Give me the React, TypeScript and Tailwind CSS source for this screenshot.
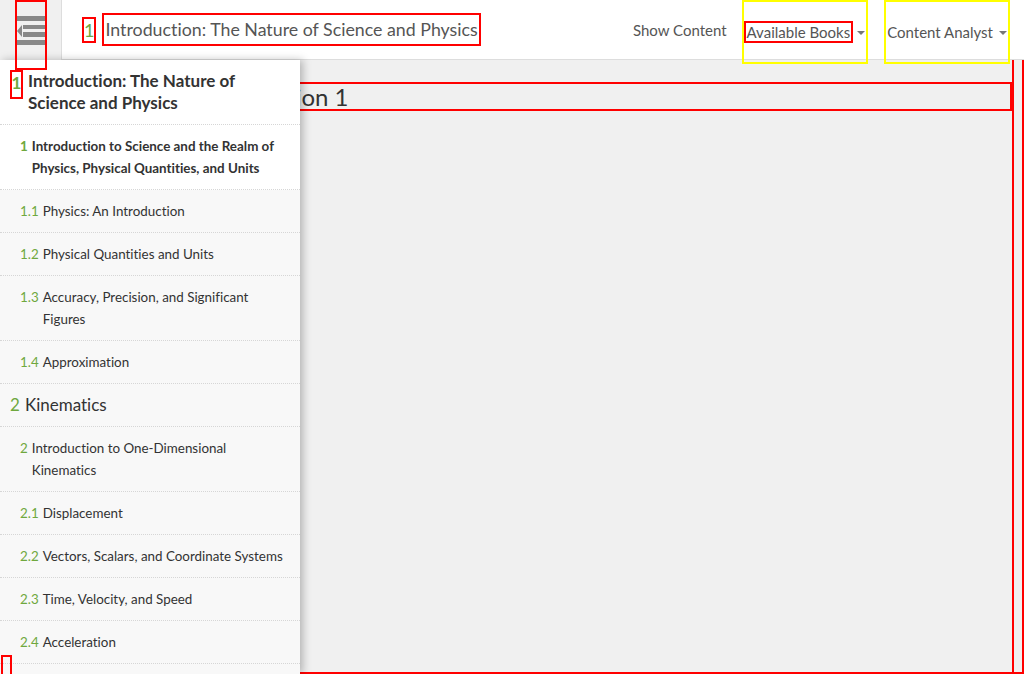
import React from "react";

type Item = {
  num: string;
  title: string;
  kind: "chapter" | "intro" | "section";
  active?: boolean;
};

const items: Item[] = [
  { num: "1", title: "Introduction to Science and the Realm of Physics, Physical Quantities, and Units", kind: "intro", active: true },
  { num: "1.1", title: "Physics: An Introduction", kind: "section" },
  { num: "1.2", title: "Physical Quantities and Units", kind: "section" },
  { num: "1.3", title: "Accuracy, Precision, and Significant Figures", kind: "section" },
  { num: "1.4", title: "Approximation", kind: "section" },
  { num: "2", title: "Kinematics", kind: "chapter" },
  { num: "2", title: "Introduction to One-Dimensional Kinematics", kind: "intro" },
  { num: "2.1", title: "Displacement", kind: "section" },
  { num: "2.2", title: "Vectors, Scalars, and Coordinate Systems", kind: "section" },
  { num: "2.3", title: "Time, Velocity, and Speed", kind: "section" },
  { num: "2.4", title: "Acceleration", kind: "section" },
];

const Caret = () => (
  <span className="inline-block w-0 h-0 border-l-[4px] border-r-[4px] border-t-[4px] border-l-transparent border-r-transparent border-t-[#777]" />
);

const ToggleIcon = () => (
  <svg width="28" height="29" viewBox="0 0 28 29" fill="#888">
    <rect x="0" y="0" width="28" height="5" />
    <polygon points="0,15 5,9 5,21" />
    <rect x="6" y="9" width="22" height="4" />
    <rect x="6" y="16" width="22" height="5" />
    <rect x="0" y="24" width="28" height="5" />
  </svg>
);

const TocRow = ({ item }: { item: Item }) => {
  if (item.kind === "chapter") {
    return (
      <div className="flex gap-[5px] pl-[10px] pr-4 py-[10px] border-b border-dotted border-[#d6d6d6] text-[17px] leading-[22px] text-[#333]">
        <span className="text-[#6fa83e]">{item.num}</span>
        <span>{item.title}</span>
      </div>
    );
  }
  return (
    <div
      className={`flex gap-[4px] pl-[20px] pr-[16px] py-[10px] border-b border-dotted border-[#d6d6d6] text-[13.4px] leading-[22px] text-[#333] ${
        item.active ? "bg-white font-bold" : ""
      }`}
    >
      <span className="text-[#6fa83e] shrink-0">{item.num}</span>
      <span>{item.title}</span>
    </div>
  );
};

export default function App() {
  return (
    <div className="relative w-[1024px] h-[674px] overflow-hidden bg-[#f0f0f0] font-['Lato','Noto_Sans',sans-serif] [font-variant-ligatures:none]">
      {/* Top bar */}
      <div className="flex h-[60px]">
        <div className="w-[61px] h-[60px] relative z-20">
          <button
            type="button"
            className="ml-[15px] w-[32px] h-[70px] border-2 border-[#ff0000] flex flex-col items-start pt-[14px]"
          >
            <ToggleIcon />
          </button>
        </div>
        <div className="flex-1 flex items-center bg-white border-l border-b border-[#ddd] pl-[20px] pr-[14px]">
          <span className="h-[26px] border-2 border-[#ff0000] text-[18px] leading-[22px] text-[#6fa83e] flex items-center">
            1
          </span>
          <span className="ml-[6px] h-[33px] px-[1px] border-2 border-[#ff0000] text-[17.8px] leading-[29px] text-[#555]">
            Introduction: The Nature of Science and Physics
          </span>
          <div className="ml-auto flex items-start h-full">
            <span className="self-center text-[15px] text-[#555] mt-[2px]">Show Content</span>
            <div className="ml-[15px] h-[64px] border-2 border-[#ffff00] flex items-center pr-[1px] relative z-20">
              <span className="h-[22px] border-2 border-[#ff0000] text-[15px] leading-[18px] text-[#555] px-[1px]">
                Available Books
              </span>
              <span className="ml-[4px] mt-[2px] flex">
                <Caret />
              </span>
            </div>
            <div className="ml-[16px] h-[64px] border-2 border-[#ffff00] flex items-center pl-[1px] pr-[1px] relative z-20">
              <span className="text-[15px] leading-[18px] text-[#555]">Content Analyst</span>
              <span className="ml-[6px] mt-[2px] flex">
                <Caret />
              </span>
            </div>
          </div>
        </div>
      </div>

      {/* Main content */}
      <div className="h-[614px] border-r-2 border-b-2 border-[#ff0000]">
        <div className="h-full mr-[8px] border-r-2 border-[#ff0000] pt-[22px]">
          <h2 className="border-2 border-[#ff0000] pl-[248px] text-[24px] leading-[25px] text-[#333]">
            Section 1
          </h2>
        </div>
      </div>

      {/* Sidebar drawer */}
      <div className="absolute left-0 top-[60px] bottom-0 w-[300px] bg-[#f8f8f8] shadow-[3px_0_8px_rgba(0,0,0,0.25)] z-10 overflow-hidden">
        <div className="flex gap-[5px] pl-[10px] pr-4 pt-[10px] pb-[10px] bg-white border-b border-dotted border-[#d6d6d6]">
          <span className="shrink-0 w-[13px] h-[29px] border-2 border-[#ff0000] text-[17px] leading-[22px] font-bold text-[#6fa83e] flex justify-center">
            1
          </span>
          <span className="text-[17px] leading-[22px] font-bold text-[#333]">
            Introduction: The Nature of Science and Physics
          </span>
        </div>
        {items.map((item, i) => (
          <TocRow key={i} item={item} />
        ))}
        <span className="absolute left-[1px] top-[595px] w-[11px] h-[24px] border-2 border-[#ff0000]" />
      </div>
    </div>
  );
}
